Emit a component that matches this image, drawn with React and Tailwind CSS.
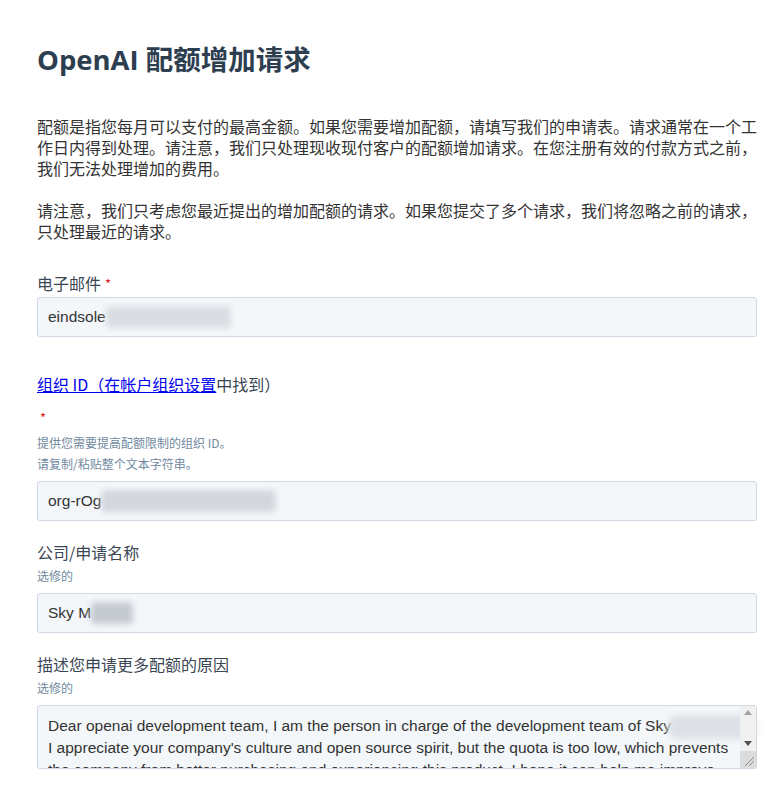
import React from 'react';

const cjk = '"Noto Sans CJK SC", "Liberation Sans", sans-serif';

function Blur({ w, tone = 'bg-[#d5d9de]' }) {
    return <span className={`inline-block h-[22px] align-middle ${tone} blur-[3px] rounded-sm`} style={{ width: w }}></span>;
}

function Label({ children, required }) {
    return (
        <div className="text-[16px] leading-[21px] text-[#3a4654]">
            {children}
            {required && <span className="text-[#e02020] text-[13px] align-top ml-1">*</span>}
        </div>
    );
}

function Hint({ children, className = '' }) {
    return <div className={`text-[12px] leading-[21px] text-[#7189a0] ${className}`}>{children}</div>;
}

function Field({ children }) {
    return (
        <div className="h-[40px] w-full rounded-[3px] border border-[#cfd8e3] bg-[#f4f7fa] px-[10px] flex items-center text-[15.5px] text-[#333] overflow-hidden whitespace-nowrap" style={{ fontFamily: '"Liberation Sans", sans-serif' }}>
            {children}
        </div>
    );
}

export default function App() {
    return (
        <div className="bg-white min-h-[789px] w-[784px] pl-[37px] pr-[27px] pt-[42px]" style={{ fontFamily: cjk }}>
            <h1 className="text-[27.5px] leading-[36px] font-bold text-[#2d3e50]" style={{ fontFamily: '"Open Sans", "Noto Sans CJK SC", sans-serif' }}>
                OpenAI 配额增加请求
            </h1>

            {/* 说明 */}
            <div className="mt-[38px] mr-[-1px] text-[16px] leading-[21px] text-[#333]">
                <p>配额是指您每月可以支付的最高金额。如果您需要增加配额，请填写我们的申请表。请求通常在一个工作日内得到处理。请注意，我们只处理现收现付客户的配额增加请求。在您注册有效的付款方式之前，我们无法处理增加的费用。</p>
                <p className="mt-[21px]">请注意，我们只考虑您最近提出的增加配额的请求。如果您提交了多个请求，我们将忽略之前的请求，只处理最近的请求。</p>
            </div>

            {/* 电子邮件 */}
            <div className="mt-[31px]">
                <Label required>电子邮件</Label>
                <div className="mt-[2.5px]">
                    <Field>eindsole<Blur w={125} tone="bg-[#d9dde2]" /></Field>
                </div>
            </div>

            {/* 组织 ID */}
            <div className="mt-[37.5px]">
                <div className="text-[16px] leading-[21px] text-[#3a4654]">
                    <a href="#" className="text-[#0000ee] underline">组织 ID（在帐户组织设置</a>中找到）
                </div>
                <div className="h-[20px] mt-[13px] pl-[3px] text-[#e02020] text-[13px] leading-[20px]">*</div>
                <div className="mt-[4px]">
                    <Hint>提供您需要提高配额限制的组织 ID。</Hint>
                    <Hint>请复制/粘贴整个文本字符串。</Hint>
                </div>
                <div className="mt-[6.5px]">
                    <Field>org-rOg<Blur w={175} tone="bg-[#d3d7dd]" /></Field>
                </div>
            </div>

            {/* 公司 */}
            <div className="mt-[21.5px]">
                <Label>公司/申请名称</Label>
                <Hint className="mt-[2px]">选修的</Hint>
                <div className="mt-[6.5px]">
                    <Field>Sky M<Blur w={42} tone="bg-[#c5cad1]" /></Field>
                </div>
            </div>

            {/* 原因 */}
            <div className="mt-[21.5px]">
                <Label>描述您申请更多配额的原因</Label>
                <Hint className="mt-[2px]">选修的</Hint>
                <div className="mt-[6.5px] relative">
                    <textarea
                        readOnly
                        className="block h-[64px] w-full resize-none overflow-hidden rounded-[3px] border border-[#cfd8e3] bg-[#f4f7fa] pl-[10px] pr-[24px] pt-[9px] text-[15.5px] leading-[22px] text-[#333] outline-none"
                        style={{ fontFamily: '"Liberation Sans", sans-serif' }}
                        defaultValue={"Dear openai development team, I am the person in charge of the development team of Sky M.\nI appreciate your company's culture and open source spirit, but the quota is too low, which prevents the company from better purchasing and experiencing this product. I hope it can help me improve the quota limit."}
                    />
                    <span className="absolute left-[630px] top-[10px] h-[24px] w-[90px] rounded-full bg-[#dde1e6] blur-[3px]"></span>
                    {/* scrollbar */}
                    <div className="absolute right-[1px] top-[1px] bottom-[1px] w-[16px] flex flex-col bg-[#f1f1f1]">
                        <div className="h-[14px] flex items-center justify-center">
                            <span className="w-0 h-0 border-l-[4px] border-r-[4px] border-b-[5px] border-l-transparent border-r-transparent border-b-[#a3a3a3]"></span>
                        </div>
                        <div className="flex-1"></div>
                        <div className="h-[14px] flex items-center justify-center">
                            <span className="w-0 h-0 border-l-[4px] border-r-[4px] border-t-[5px] border-l-transparent border-r-transparent border-t-[#505050]"></span>
                        </div>
                        <div className="h-[17px] bg-[#dcdcdc] relative">
                            <svg width="16" height="17" viewBox="0 0 16 17" className="absolute inset-0">
                                <line x1="5" y1="15" x2="14" y2="6" stroke="#8a8a8a" strokeWidth="1" />
                                <line x1="9" y1="15" x2="14" y2="10" stroke="#8a8a8a" strokeWidth="1" />
                            </svg>
                        </div>
                    </div>
                </div>
            </div>
        </div>
    );
}
